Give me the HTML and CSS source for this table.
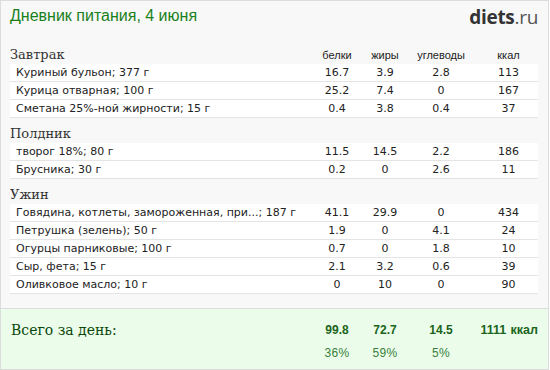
FILE: index.html
```html
<!DOCTYPE html>
<html lang="ru">
<head>
<meta charset="utf-8">
<title>Дневник питания</title>
<link rel="stylesheet" href="styles.css">
</head>
<body>
<div class="page">
  <div class="content">
    <header class="top">
      <h1 class="title">Дневник питания, 4 июня</h1>
      <div class="logo"><b>diets</b>.ru</div>
    </header>

    <section class="meal">
      <div class="meal-head">
        <h2 class="meal-name">Завтрак</h2>
        <span class="col">белки</span><span class="col">жиры</span><span class="col">углеводы</span><span class="col kcal">ккал</span>
      </div>
      <div class="row"><span class="name">Куриный бульон; 377 г</span><span class="col">16.7</span><span class="col">3.9</span><span class="col">2.8</span><span class="col kcal">113</span></div>
      <div class="row"><span class="name">Курица отварная; 100 г</span><span class="col">25.2</span><span class="col">7.4</span><span class="col">0</span><span class="col kcal">167</span></div>
      <div class="row"><span class="name">Сметана 25%-ной жирности; 15 г</span><span class="col">0.4</span><span class="col">3.8</span><span class="col">0.4</span><span class="col kcal">37</span></div>
    </section>

    <section class="meal">
      <div class="meal-head"><h2 class="meal-name">Полдник</h2></div>
      <div class="row"><span class="name">творог 18%; 80 г</span><span class="col">11.5</span><span class="col">14.5</span><span class="col">2.2</span><span class="col kcal">186</span></div>
      <div class="row"><span class="name">Брусника; 30 г</span><span class="col">0.2</span><span class="col">0</span><span class="col">2.6</span><span class="col kcal">11</span></div>
    </section>

    <section class="meal">
      <div class="meal-head"><h2 class="meal-name">Ужин</h2></div>
      <div class="row"><span class="name">Говядина, котлеты, замороженная, при...; 187 г</span><span class="col">41.1</span><span class="col">29.9</span><span class="col">0</span><span class="col kcal">434</span></div>
      <div class="row"><span class="name">Петрушка (зелень); 50 г</span><span class="col">1.9</span><span class="col">0</span><span class="col">4.1</span><span class="col kcal">24</span></div>
      <div class="row"><span class="name">Огурцы парниковые; 100 г</span><span class="col">0.7</span><span class="col">0</span><span class="col">1.8</span><span class="col kcal">10</span></div>
      <div class="row"><span class="name">Сыр, фета; 15 г</span><span class="col">2.1</span><span class="col">3.2</span><span class="col">0.6</span><span class="col kcal">39</span></div>
      <div class="row"><span class="name">Оливковое масло; 10 г</span><span class="col">0</span><span class="col">10</span><span class="col">0</span><span class="col kcal">90</span></div>
    </section>
  </div>

  <footer class="total">
    <div class="total-row">
      <span class="total-label">Всего за день:</span>
      <b class="col">99.8</b><b class="col">72.7</b><b class="col">14.5</b><b class="col total-kcal">1111 ккал</b>
    </div>
    <div class="total-row pct">
      <span></span>
      <span class="col">36%</span><span class="col">59%</span><span class="col">5%</span><span class="col"></span>
    </div>
  </footer>
</div>
</body>
</html>
```

FILE: styles.css
```css
* { box-sizing: border-box; }
html, body { margin: 0; padding: 0; background: #fff; }

.page {
  width: 549px;
  height: 370px;
  border: 1px solid #dcdcdc;
  background: #f8f8f8;
  display: flex;
  flex-direction: column;
}

.content {
  padding: 5px 10px 0 9px;
  flex: 0 0 auto;
}

.top {
  display: flex;
  justify-content: space-between;
  align-items: flex-start;
  height: 40px;
}

.title {
  margin: 0;
  font: 16px/20px "Liberation Sans", Arial, sans-serif;
  color: #1a801a;
}

.logo {
  font: 19px/20px "Open Sans", "Liberation Sans", sans-serif;
  color: #555;
  letter-spacing: -0.3px;
  margin-top: 1px;
}
.logo b { color: #333; font-weight: 700; }

.meal { margin-bottom: 7px; }

.meal-head,
.row,
.total-row {
  display: grid;
  grid-template-columns: 1fr 48px 48px 64px 65px;
  align-items: center;
}

.meal-head { height: 18px; }

.meal-name {
  margin: 0;
  font: 13px/18px "DejaVu Serif", Georgia, serif;
  color: #333;
  font-weight: normal;
}

.meal-head .col {
  font: 11px/18px "Liberation Sans", Arial, sans-serif;
  color: #222;
  text-align: center;
}

.col { text-align: center; }
.kcal { padding-left: 6px; }

.row {
  height: 18px;
  background: #fff;
  border-bottom: 1px solid #e4e4e4;
  font: 11px/17px "DejaVu Sans", Verdana, sans-serif;
  color: #222;
}
.row .name { padding-left: 6px; white-space: nowrap; overflow: hidden; }

.total {
  margin-top: 7px;
  flex: 1;
  border-top: 1px solid #dcdcdc;
  background: #ebfdea;
  padding: 11px 10px 0 9px;
}

.total-label {
  font: 14px/20px "DejaVu Serif", Georgia, serif;
  color: #0a470a;
  padding-left: 1px;
}

.total-row b {
  font: bold 12px/20px "Liberation Sans", Arial, sans-serif;
  color: #1b641b;
}
.total-kcal { text-align: right; font-size: 12.5px !important; word-spacing: 1px; }

.pct .col {
  font: 12px/20px "Liberation Sans", Arial, sans-serif;
  color: #3a7f3a;
  letter-spacing: 0.4px;
}
.pct { margin-top: 3px; }
```
